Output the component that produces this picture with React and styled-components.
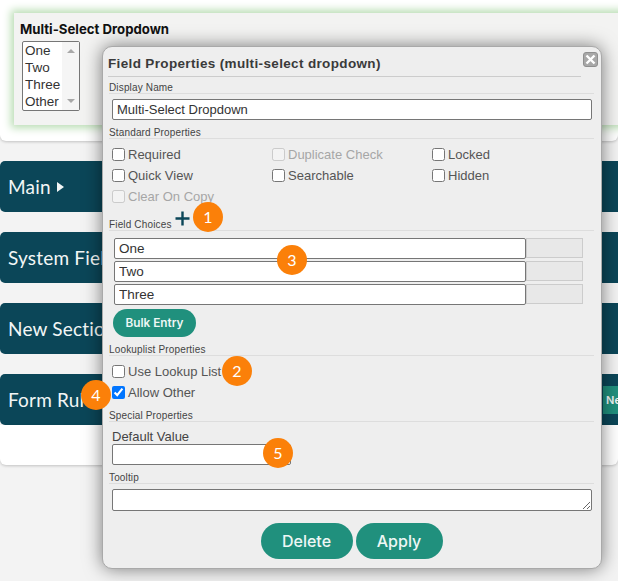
import React from "react"
import styled, { createGlobalStyle } from "styled-components"

const GlobalStyle = createGlobalStyle`
  html, body {
    margin: 0;
    padding: 0;
    background: #f3f3f3;
  }
`

const Page = styled.div`
  position: relative;
  width: 618px;
  height: 581px;
  overflow: hidden;
  background: #f3f3f3;
  font-family: "Liberation Sans", Arial, sans-serif;
`

const TopCard = styled.div`
  height: 141px;
  padding: 13px 0 0 14px;
  box-sizing: border-box;
  background: #fff;
  border-radius: 0 0 6px 6px;
  box-shadow: 0 1px 3px rgba(0, 0, 0, 0.2);
`

const FieldBox = styled.div`
  width: 640px;
  height: 112px;
  padding: 9px 6px;
  box-sizing: border-box;
  background: #f3f3f2;
  box-shadow: 0 0 8px 3px #b9ddb3;
`

const FieldTitle = styled.div`
  font-family: Inter, sans-serif;
  font-size: 13.2px;
  font-weight: 700;
  line-height: 14px;
  color: #111;
`

const ListBox = styled.div`
  display: flex;
  justify-content: space-between;
  width: 58px;
  height: 70px;
  margin: 5px 0 0 2px;
  box-sizing: border-box;
  background: #fff;
  border: 1px solid #767676;
  border-radius: 2px;
  font-size: 13.5px;
  line-height: 17px;
  color: #333;
`

const ListItems = styled.div`
  padding-left: 2px;
`

const ListScroll = styled.div`
  width: 17px;
  display: flex;
  flex-direction: column;
  justify-content: space-between;
  align-items: center;
  padding: 7px 0;
  box-sizing: border-box;
  background: #f5f5f5;
`

const Arrow = styled.span`
  width: 0;
  height: 0;
  border-left: 4px solid transparent;
  border-right: 4px solid transparent;
  border-bottom: ${(p) => (p.$up ? "4px solid #a8a8a8" : "none")};
  border-top: ${(p) => (p.$up ? "none" : "4px solid #a8a8a8")};
`

const Sections = styled.div`
  display: flex;
  flex-direction: column;
  gap: 20px;
  margin-top: 20px;
`

const SectionBar = styled.div`
  display: flex;
  align-items: center;
  justify-content: space-between;
  height: 51px;
  padding-left: 8px;
  box-sizing: border-box;
  background: #0b4658;
  border-radius: 5px 0 0 5px;
  font-family: Lato, sans-serif;
  font-size: 19px;
  letter-spacing: 0.2px;
  color: #f2f6f6;
  white-space: nowrap;
`

const BarTitle = styled.span`
  display: flex;
  align-items: center;
  gap: 6px;
`

const Caret = styled.span`
  width: 0;
  height: 0;
  border-top: 5px solid transparent;
  border-bottom: 5px solid transparent;
  border-left: 7px solid #f2f6f6;
`

const NewButton = styled.span`
  flex: none;
  width: 40px;
  height: 28px;
  margin-right: -25px;
  padding-left: 3px;
  box-sizing: border-box;
  background: #20907d;
  font-family: Inter, sans-serif;
  font-size: 11px;
  font-weight: 600;
  line-height: 28px;
`

const BottomCard = styled.div`
  height: 40px;
  background: #fff;
  border-radius: 0 0 6px 6px;
  box-shadow: 0 1px 3px rgba(0, 0, 0, 0.2);
  margin-top: -20px;
`

const Modal = styled.div`
  position: absolute;
  left: 102px;
  top: 46px;
  width: 500px;
  height: 523px;
  padding: 0 7px 0 6px;
  box-sizing: border-box;
  background: #eee;
  border: 1px solid #a9a9a9;
  border-radius: 10px;
  box-shadow: 0 0 18px rgba(0, 0, 0, 0.5);
`

const Header = styled.div`
  width: 473px;
  height: 30px;
  margin-left: -1px;
  box-sizing: border-box;
  border-bottom: 1px solid #ccc;
  font-size: 13.5px;
  font-weight: 700;
  letter-spacing: 0.35px;
  line-height: 34px;
  color: #3a3a3a;
`

const CloseButton = styled.svg`
  position: absolute;
  right: 3px;
  top: 5px;
`

const Label = styled.div`
  display: flex;
  margin-top: ${(p) => p.$top}px;
  height: 12px;
  box-sizing: border-box;
  border-bottom: 1px solid #ddd;
  font-size: 10px;
  letter-spacing: 0.15px;
  line-height: 11px;
  color: #444;
`

const PlusIcon = styled.svg`
  flex: none;
  margin: -8px 0 0 3px;
`

const TextInput = styled.input`
  display: block;
  width: ${(p) => p.$width || 480}px;
  height: 21px;
  margin: ${(p) => p.$margin || "5px 0 0 3px"};
  padding: 0 4px;
  box-sizing: border-box;
  background: #fff;
  border: 1px solid #767676;
  border-radius: 2px;
  font-family: "Liberation Sans", Arial, sans-serif;
  font-size: 13px;
  color: #333;
`

const CheckGrid = styled.div`
  display: grid;
  grid-template-columns: repeat(3, 160px);
  grid-auto-rows: 21px;
  margin: 5px 0 0 3px;
`

const CheckRow = styled.label`
  display: flex;
  align-items: center;
  gap: 3px;
  font-size: 13px;
  color: ${(p) => (p.$off ? "#a6a6a6" : "#555")};
`

const Check = styled.input.attrs({ type: "checkbox" })`
  width: 13px;
  height: 13px;
  margin: 0;
`

const Choices = styled.div`
  display: flex;
  flex-direction: column;
  gap: 2px;
  margin: 7px 0 0 5px;
`

const ChoiceRow = styled.div`
  display: flex;
`

const ChoiceInput = styled.input`
  width: 412px;
  height: 21px;
  padding: 0 4px;
  box-sizing: border-box;
  background: #fff;
  border: 1px solid #767676;
  border-radius: 2px;
  font-family: "Liberation Sans", Arial, sans-serif;
  font-size: 13.5px;
  color: #333;
`

const ChoiceSide = styled.div`
  width: 57px;
  height: 20px;
  box-sizing: border-box;
  background: #e8e8e8;
  border: 1px solid #ccc;
`

const BulkButton = styled.button`
  display: block;
  width: 83px;
  height: 28px;
  margin: 4px 0 0 4px;
  padding: 0;
  border: 0;
  border-radius: 14px;
  background: #20907d;
  color: #eef7f5;
  font-family: Inter, sans-serif;
  font-size: 11.8px;
  font-weight: 600;
`

const DefaultLabel = styled.div`
  margin: 8px 0 0 3px;
  font-size: 13px;
  line-height: 14px;
  color: #444;
`

const TooltipArea = styled.textarea`
  display: block;
  width: 480px;
  height: 22px;
  margin: 5px 0 0 3px;
  padding: 0;
  box-sizing: border-box;
  background: #fff;
  border: 1px solid #767676;
  border-radius: 2px;
`

const Actions = styled.div`
  display: flex;
  justify-content: center;
  gap: 3px;
  margin-top: 12px;
`

const ActionButton = styled.button`
  width: ${(p) => p.$width}px;
  height: 36px;
  padding: 0;
  border: 0;
  border-radius: 18px;
  background: #20907d;
  color: #eef7f5;
  font-family: Inter, sans-serif;
  font-size: 16px;
  font-weight: 500;
`

const Badge = styled.span`
  position: absolute;
  z-index: 2;
  left: ${(p) => p.$cx - 118}px;
  top: ${(p) => p.$cy - 62}px;
  width: 30px;
  height: 30px;
  border-radius: 50%;
  background: #fb8009;
  color: #fff;
  font-family: Lato, sans-serif;
  font-size: 16px;
  line-height: 30px;
  text-align: center;
`

const bars = ["System Fields", "New Section"]

export default function App() {
  return (
    <Page>
      <GlobalStyle />
      <TopCard>
        <FieldBox>
          <FieldTitle>Multi-Select Dropdown</FieldTitle>
          <ListBox>
            <ListItems>
              <div>One</div>
              <div>Two</div>
              <div>Three</div>
              <div>Other</div>
            </ListItems>
            <ListScroll>
              <Arrow $up />
              <Arrow />
            </ListScroll>
          </ListBox>
        </FieldBox>
      </TopCard>

      <Sections>
        <SectionBar>
          <BarTitle>
            Main <Caret />
          </BarTitle>
        </SectionBar>
        {bars.map((b) => (
          <SectionBar key={b}>{b}</SectionBar>
        ))}
        <SectionBar>
          Form Rules
          <NewButton>New</NewButton>
        </SectionBar>
        <BottomCard />
      </Sections>

      <Modal>
        <Header>Field Properties (multi-select dropdown)</Header>
        <CloseButton width="15" height="15" viewBox="0 0 15 15">
          <rect x="0.5" y="0.5" width="14" height="14" rx="2.5" fill="#a8a8a8" stroke="#8f8f8f" />
          <path d="M3.5 3.5l8 8M11.5 3.5l-8 8" stroke="#fff" strokeWidth="2.4" />
        </CloseButton>

        <Label $top={5}>Display Name</Label>
        <TextInput defaultValue="Multi-Select Dropdown" />

        <Label $top={7}>Standard Properties</Label>
        <CheckGrid>
          <CheckRow><Check />Required</CheckRow>
          <CheckRow $off><Check disabled />Duplicate Check</CheckRow>
          <CheckRow><Check />Locked</CheckRow>
          <CheckRow><Check />Quick View</CheckRow>
          <CheckRow><Check />Searchable</CheckRow>
          <CheckRow><Check />Hidden</CheckRow>
          <CheckRow $off><Check disabled />Clear On Copy</CheckRow>
        </CheckGrid>

        <Label $top={12}>
          Field Choices
          <PlusIcon width="15" height="15" viewBox="0 0 15 15">
            <path d="M7.5 0.5v14M0.5 7.5h14" stroke="#0b4658" strokeWidth="2.4" />
          </PlusIcon>
        </Label>
        <Choices>
          {["One", "Two", "Three"].map((c) => (
            <ChoiceRow key={c}>
              <ChoiceInput defaultValue={c} />
              <ChoiceSide />
            </ChoiceRow>
          ))}
        </Choices>
        <BulkButton>Bulk Entry</BulkButton>

        <Label $top={7}>Lookuplist Properties</Label>
        <CheckGrid>
          <CheckRow><Check />Use Lookup List</CheckRow>
          <span />
          <span />
          <CheckRow><Check defaultChecked />Allow Other</CheckRow>
        </CheckGrid>

        <Label $top={7}>Special Properties</Label>
        <DefaultLabel>Default Value</DefaultLabel>
        <TextInput $width={179} $margin="0 0 0 3px" />

        <Label $top={7}>Tooltip</Label>
        <TooltipArea />

        <Actions>
          <ActionButton $width={92}>Delete</ActionButton>
          <ActionButton $width={87}>Apply</ActionButton>
        </Actions>

        <Badge $cx={208} $cy={217}>1</Badge>
        <Badge $cx={237} $cy={371}>2</Badge>
        <Badge $cx={292} $cy={260}>3</Badge>
        <Badge $cx={96} $cy={395}>4</Badge>
        <Badge $cx={278} $cy={453}>5</Badge>
      </Modal>
    </Page>
  )
}
